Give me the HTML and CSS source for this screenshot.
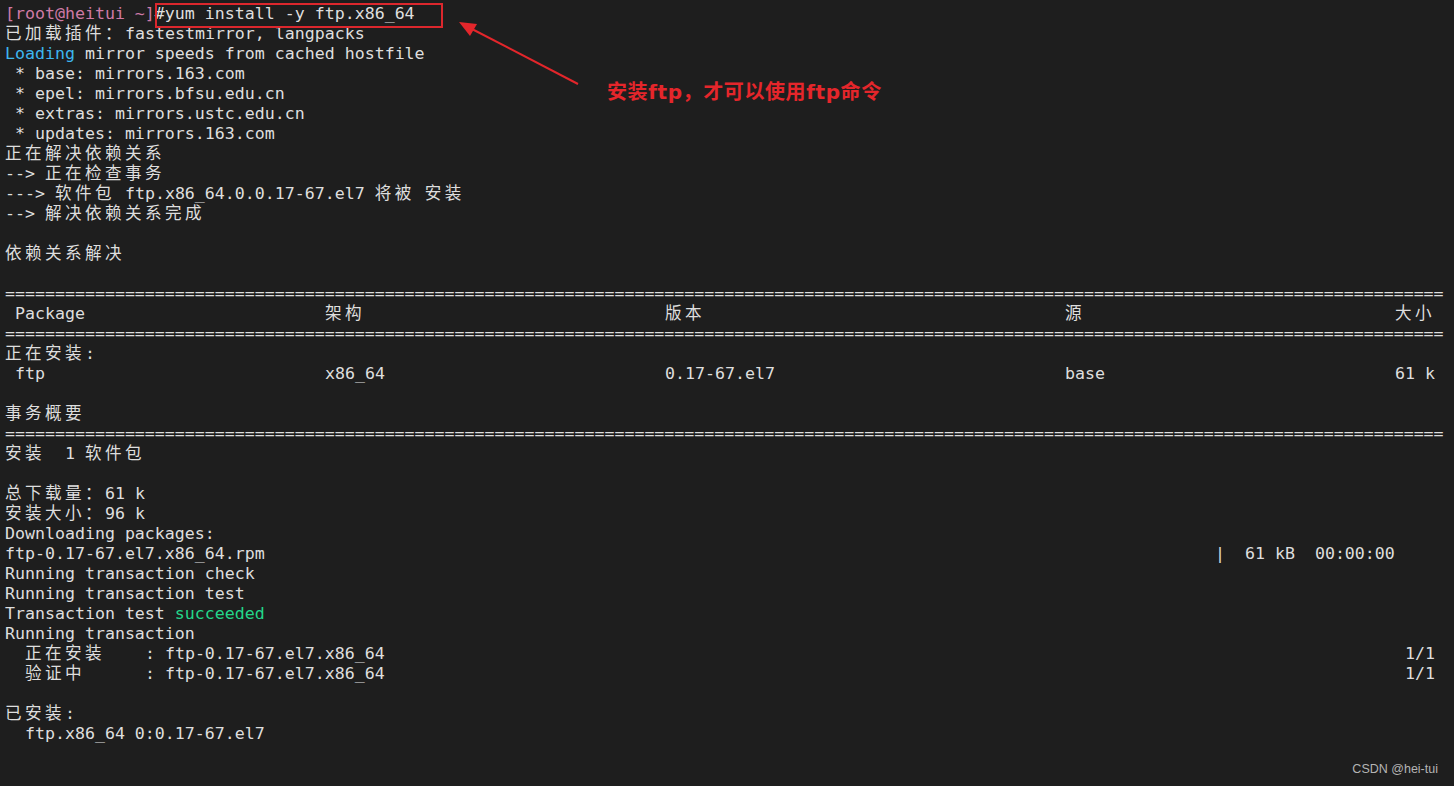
FILE: index.html
```html
<!DOCTYPE html>
<html lang="zh-CN">
<head>
    <meta charset="UTF-8">
    <meta name="viewport" content="width=device-width, initial-scale=1.0">
    <title>yum install ftp</title>
    <link rel="stylesheet" href="styles.css">
</head>
<body>
    <div class="term">
<pre class="screen"><span class="prompt">[root@heitui ~]</span>#yum install -y ftp.x86_64
<span class="w">已加载插件：</span>fastestmirror, langpacks
<span class="info">Loading</span> mirror speeds from cached hostfile
 * base: mirrors.163.com
 * epel: mirrors.bfsu.edu.cn
 * extras: mirrors.ustc.edu.cn
 * updates: mirrors.163.com
<span class="w">正在解决依赖关系</span>
--> <span class="w">正在检查事务</span>
---> <span class="w">软件包</span> ftp.x86_64.0.0.17-67.el7 <span class="w">将被</span> <span class="w">安装</span>
--> <span class="w">解决依赖关系完成</span>

<span class="w">依赖关系解决</span>

================================================================================================================================================
<span class="c-pkg"> Package</span><span class="c-arch"><span class="w">架构</span></span><span class="c-ver"><span class="w">版本</span></span><span class="c-repo"><span class="w">源</span></span><span class="w">大小</span>
================================================================================================================================================
<span class="w">正在安装</span>:
<span class="c-pkg"> ftp</span><span class="c-arch">x86_64</span><span class="c-ver">0.17-67.el7</span><span class="c-repo">base</span>61 k

<span class="w">事务概要</span>
================================================================================================================================================
<span class="w">安装</span>  1 <span class="w">软件包</span>

<span class="w">总下载量：</span>61 k
<span class="w">安装大小：</span>96 k
Downloading packages:
<span class="c-file">ftp-0.17-67.el7.x86_64.rpm</span>|  61 kB  00:00:00
Running transaction check
Running transaction test
Transaction test <span class="ok">succeeded</span>
Running transaction
<span class="c-step">  <span class="w">正在安装</span>    : ftp-0.17-67.el7.x86_64</span>1/1
<span class="c-step">  <span class="w">验证中</span>      : ftp-0.17-67.el7.x86_64</span>1/1

<span class="w">已安装</span>:
  ftp.x86_64 0:0.17-67.el7
</pre>

        <div class="mark-box"></div>
        <svg class="arrow" width="1454" height="786" viewBox="0 0 1454 786">
            <line x1="578" y1="84" x2="470" y2="28" stroke="#e3262b" stroke-width="2"/>
            <polygon points="459,22 477,24 470,36" fill="#e3262b"/>
        </svg>
        <div class="note">安装ftp，才可以使用ftp命令</div>
        <div class="watermark">CSDN @hei-tui</div>
    </div>
</body>
</html>
```

FILE: styles.css
```css
html, body {
    margin: 0;
    padding: 0;
    background-color: #1e1e1e;
}
.term {
    position: relative;
    width: 1454px;
    height: 786px;
    overflow: hidden;
    background-color: #1e1e1e;
}
.screen {
    margin: 0;
    padding: 4px 0 0 5px;
    font-family: "DejaVu Sans Mono", "Noto Sans CJK SC", monospace;
    font-size: 16.6px;
    line-height: 20px;
    color: #dedede;
}
/* wide chars take two cells */
.w {
    font-family: "Noto Sans CJK SC", sans-serif;
    letter-spacing: 3.4px;
    line-height: 1;
}
.prompt {
    color: #cf7aa6;
}
.info {
    color: #3db6f0;
}
.ok {
    color: #23d68a;
}
.c-pkg, .c-arch, .c-ver, .c-repo, .c-file, .c-step {
    display: inline-block;
    height: 20px;
    vertical-align: top;
    white-space: pre;
}
.c-pkg {
    width: 320px;
}
.c-arch {
    width: 340px;
}
.c-ver {
    width: 400px;
}
.c-repo {
    width: 330px;
}
.c-file {
    width: 1210px;
}
.c-step {
    width: 1400px;
}
.mark-box {
    position: absolute;
    left: 155px;
    top: 3px;
    width: 288px;
    height: 25px;
    box-sizing: border-box;
    border: 2px solid #dc272d;
}
.arrow {
    position: absolute;
    left: 0;
    top: 0;
    pointer-events: none;
}
.note {
    position: absolute;
    left: 607px;
    top: 80px;
    font-family: "DejaVu Sans", "Noto Sans CJK SC", sans-serif;
    font-weight: bold;
    font-size: 20px;
    line-height: 24px;
    letter-spacing: 0.6px;
    color: #e5262b;
}
.watermark {
    position: absolute;
    right: 16px;
    top: 762px;
    font-family: "Liberation Sans", Arial, sans-serif;
    font-size: 12.5px;
    color: #b4b4b4;
}
```
